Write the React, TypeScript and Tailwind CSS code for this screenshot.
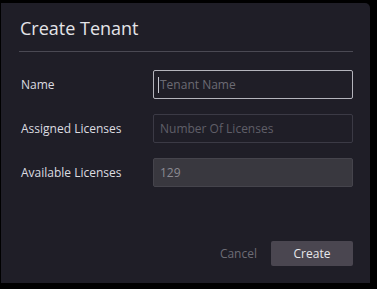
import React from 'react'

const font = { fontFamily: '"Open Sans", "Noto Sans", sans-serif' }

const Row = ({ label, children }: { label: string; children: React.ReactNode }) => (
  <div className="flex items-center">
    <div className="w-[134px] pl-[2px] text-[12px] text-[#dcdce0]">{label}</div>
    {children}
  </div>
)

export default function App() {
  return (
    <div className="w-[377px] h-[289px] bg-black overflow-hidden" style={font}>
      <div className="ml-[1px] mt-[3px] w-[369px] h-[280px] bg-[#1f1e27] rounded-tr-[5px] flex flex-col">
        <div className="mx-[18px] mr-[17px] pt-[13px] pb-[11px] border-b border-[#4a4953]">
          <h1 className="pl-[1px] text-[18px] leading-[24px] text-[#e4e4e8]">Create Tenant</h1>
        </div>

        <div className="mx-[18px] mr-[17px] mt-[18px] flex flex-col gap-[15px]">
          <Row label="Name">
            <div className="w-[200px] h-[29px] border border-[#b4b4bc] rounded-[2px] flex items-center pl-[4px] text-[12px]">
              <span className="w-px h-[16px] bg-[#c8c8d0] mr-[1px]" />
              <span className="text-[#6c6b74]">Tenant Name</span>
            </div>
          </Row>
          <Row label="Assigned Licenses">
            <div className="w-[200px] h-[29px] border border-[#3b3a45] rounded-[2px] flex items-center pl-[6px] text-[12px] text-[#5f5e68]">
              Number Of Licenses
            </div>
          </Row>
          <Row label="Available Licenses">
            <div className="w-[200px] h-[29px] border border-[#45444c] bg-[#39383f] rounded-[2px] flex items-center pl-[6px] text-[12px] text-[#8b8a92]">
              129
            </div>
          </Row>
        </div>

        <div className="mt-auto mb-[17px] mr-[17px] flex items-center justify-end gap-[14px]">
          <span className="text-[12px] text-[#6d6c75]">Cancel</span>
          <button className="w-[82px] h-[25px] rounded-[2px] bg-[#4a4650] text-[12px] text-[#e8e8ec]">Create</button>
        </div>
      </div>
    </div>
  )
}
